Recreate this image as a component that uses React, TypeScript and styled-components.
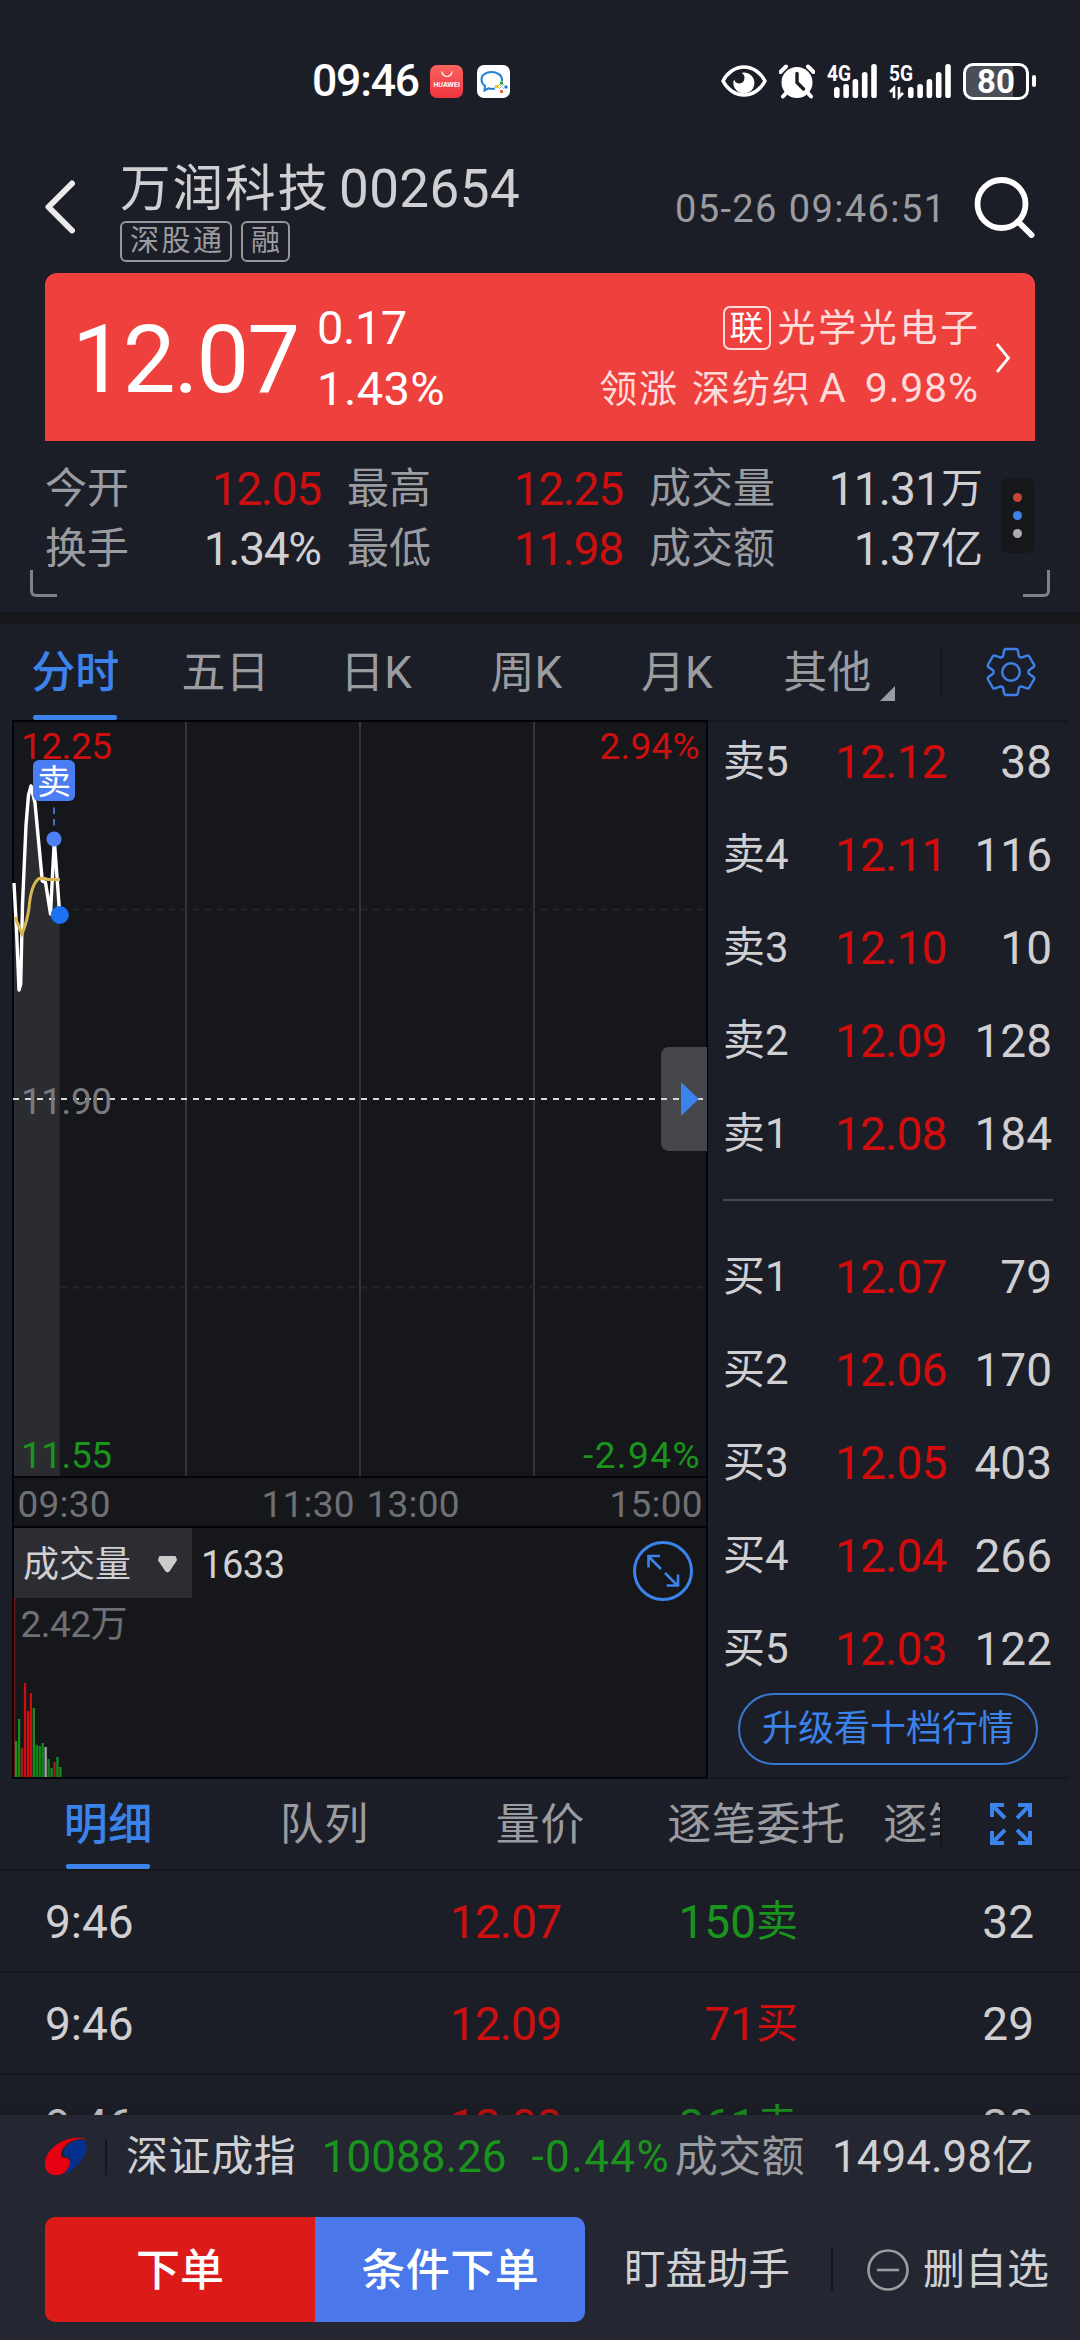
import React from "react";
import styled, { createGlobalStyle, css } from "styled-components";

const c = {
  bg: "#1c1e27",
  panel: "#16171b",
  line: "#16171d",
  edge: "#04050a",
  text: "#d0d0d2",
  muted: "#9b9ca0",
  dim: "#6f7074",
  red: "#ce0f0f",
  green: "#1a941c",
  blue: "#3b82ea",
};

const Global = createGlobalStyle`
  * { box-sizing: border-box; }
  body { margin: 0; background: ${c.bg}; }
`;

const Screen = styled.div`
  width: 1080px;
  height: 2340px;
  overflow: hidden;
  display: flex;
  flex-direction: column;
  background: ${c.bg};
  color: ${c.text};
  font-family: Roboto, "Noto Sans CJK SC", sans-serif;
`;

const T = styled.span<{ $s: number; $c?: string; $ls?: number; $w?: number }>`
  font-size: ${(p) => p.$s}px;
  line-height: 1;
  white-space: pre;
  color: ${(p) => p.$c ?? "inherit"};
  font-weight: ${(p) => p.$w ?? 400};
  letter-spacing: ${(p) => p.$ls ?? 0}px;
  margin-right: ${(p) => -(p.$ls ?? 0)}px;
`;

const Row = styled.div<{ $gap?: number }>`
  display: flex;
  align-items: center;
  gap: ${(p) => p.$gap ?? 0}px;
`;

/* ---------- status bar ---------- */

const StatusBar = styled.div`
  height: 162px;
  flex: none;
  display: flex;
  align-items: center;
  justify-content: space-between;
  padding: 0 44px 0 312px;
  color: #fff;
`;

const AppBadge = styled.div<{ $market?: boolean }>`
  width: 33px;
  height: 33px;
  border-radius: 7px;
  overflow: hidden;
  background: ${(p) => (p.$market ? "linear-gradient(#fb6460, #ee3440)" : "#fff")};
  margin-left: ${(p) => (p.$market ? 10 : 14)}px;
  display: flex;
  flex-direction: column;
  align-items: center;
`;

const BadgeName = styled.span`
  font: 700 6.5px/8px Inter, sans-serif;
  color: #fff;
  margin-top: 2px;
`;

const Battery = styled.div`
  width: 66px;
  height: 37px;
  border: 3px solid #fff;
  border-radius: 10px;
  margin-left: 12px;
  display: flex;
  align-items: center;
  justify-content: center;
  background: linear-gradient(90deg, #4b4e56 0 47px, transparent 47px);
`;

const BatteryNub = styled.div`
  width: 4px;
  height: 12px;
  border-radius: 2px;
  background: #fff;
  margin-left: 3px;
`;

const SignalSvg = styled.svg`
  overflow: visible;
`;

function Signal({ label, data }: { label: string; data?: boolean }) {
  const x0 = data ? 19 : 7;
  const tops = [23, 20, 15, 8, 0];
  return (
    <SignalSvg width={data ? 62 : 50} height={34} viewBox={`0 0 ${data ? 62 : 50} 34`}>
      <text x={0} y={17} fill="#fff" fontFamily="Roboto" fontWeight={700} fontSize={22.5} textLength={24} lengthAdjust="spacingAndGlyphs">
        {label}
      </text>
      {tops.map((t, i) => (
        <rect key={i} x={x0 + i * 9.3} y={t} width={5.6} height={34 - t} rx={2.6} fill="#fff" />
      ))}
      {data && (
        <path d="M1 28l4-4v10M10 23v10l4-4" fill="none" stroke="#fff" strokeWidth={2.6} />
      )}
    </SignalSvg>
  );
}

/* ---------- title bar ---------- */

const Header = styled.header`
  height: 111px;
  flex: none;
  display: flex;
  align-items: center;
  padding: 0 45px 22px 45px;
`;

const TitleBlock = styled.div`
  align-self: flex-start;
  margin-left: 45px;
  flex: 1;
  display: flex;
  flex-direction: column;
`;

const TitleLine = styled.div`
  display: flex;
  align-items: center;
  height: 59px;
  padding-bottom: 5px;
`;

const Tag = styled.span`
  height: 41px;
  padding: 0 8px;
  border: 2px solid #96979b;
  border-radius: 6px;
  display: flex;
  align-items: center;
`;

const Clock = styled.div`
  display: flex;
  padding-top: 5px;
`;

/* ---------- price card ---------- */

const Card = styled.section`
  height: 168px;
  flex: none;
  margin: 0 45px;
  padding: 2px 24px 0 27px;
  border-radius: 12px 12px 0 0;
  background: #ee403d;
  color: #fff;
  display: flex;
  align-items: center;
`;

const BigPrice = styled.div`
  display: flex;
  padding-top: 3px;
`;

const Lines = styled.div<{ $end?: boolean }>`
  display: flex;
  flex-direction: column;
  margin-left: ${(p) => (p.$end ? "auto" : "17px")};
  align-items: ${(p) => (p.$end ? "flex-end" : "flex-start")};
  > * {
    height: 61px;
    display: flex;
    align-items: center;
  }
`;

const LinkTag = styled.span`
  width: 48px;
  height: 44px;
  border: 2px solid #fddcdb;
  border-radius: 7px;
  display: flex;
  align-items: center;
  justify-content: center;
  margin-right: 7px;
`;

/* ---------- quote stats ---------- */

const Stats = styled.section`
  position: relative;
  height: 171px;
  flex: none;
  display: flex;
  padding: 18px 45px 0 45px;
`;

const StatGrid = styled.div`
  display: grid;
  grid-template-columns: 277px 277px 334px;
  grid-auto-rows: 60px;
  column-gap: 25px;
`;

const Stat = styled.div`
  display: flex;
  align-items: center;
  justify-content: space-between;
`;

const MorePill = styled.div`
  margin: 19px 0 0 18px;
  width: 33px;
  height: 75px;
  border-radius: 7px;
  background: ${c.panel};
  display: flex;
  flex-direction: column;
  align-items: center;
  justify-content: center;
  gap: 9px;
`;

const Dot = styled.i<{ $c: string }>`
  width: 9px;
  height: 9px;
  border-radius: 50%;
  background: ${(p) => p.$c};
`;

const Corner = styled.div<{ $right?: boolean }>`
  position: absolute;
  bottom: 15px;
  width: 27px;
  height: 27px;
  border-bottom: 3px solid #808184;
  ${(p) =>
    p.$right
      ? css`right: 30px; border-right: 3px solid #808184; border-bottom-right-radius: 6px;`
      : css`left: 30px; border-left: 3px solid #808184; border-bottom-left-radius: 6px;`}
`;

const Band = styled.div`
  height: 12px;
  flex: none;
  background: ${c.panel};
`;

/* ---------- tabs ---------- */

const TabBar = styled.nav<{ $h: number; $ruled?: boolean }>`
  height: ${(p) => p.$h}px;
  flex: none;
  display: flex;
  align-items: center;
  border-bottom: ${(p) => (p.$ruled ? `2px solid ${c.line}` : "none")};
`;

const TabStrip = styled.div`
  width: 940px;
  height: 100%;
  display: flex;
  overflow: hidden;
  flex: none;
`;

const Tab = styled.div<{ $w: number; $on?: boolean }>`
  width: ${(p) => p.$w}px;
  flex: none;
  height: 100%;
  display: flex;
  flex-direction: column;
  align-items: center;
  justify-content: space-between;
  color: ${(p) => (p.$on ? c.blue : c.muted)};
  &::after {
    content: "";
    width: 84px;
    height: 5px;
    border-radius: 2px;
    background: ${(p) => (p.$on ? c.blue : "transparent")};
  }
`;

const TabText = styled.div<{ $top: number }>`
  padding-top: ${(p) => p.$top}px;
  display: flex;
  align-items: flex-end;
  height: ${(p) => p.$top + 50}px;
`;

const Caret = styled.i`
  border-style: solid;
  border-width: 0 0 15px 15px;
  border-color: transparent transparent ${c.muted} transparent;
  margin: 0 -24px -6px 9px;
`;

const VLine = styled.div<{ $h: number }>`
  width: 2px;
  flex: none;
  height: ${(p) => p.$h}px;
  background: #15161b;
`;

const TabIcon = styled.div`
  flex: 1;
  display: flex;
  justify-content: center;
`;

/* ---------- chart + order book ---------- */

const Market = styled.section`
  height: 1059px;
  flex: none;
  display: flex;
  padding: 0 12px;
`;

const ChartBox = styled.div`
  width: 696px;
  flex: none;
  display: flex;
  background: ${c.panel};
`;

const Book = styled.div`
  flex: 1;
  display: flex;
  flex-direction: column;
  border-top: 2px solid ${c.line};
  border-bottom: 2px solid ${c.line};
  padding: 0 15px;
`;

const BookSide = styled.div<{ $buy?: boolean }>`
  margin-top: ${(p) => (p.$buy ? 29 : -7)}px;
`;

const BookRow = styled.div`
  height: 93px;
  display: grid;
  grid-template-columns: 112px 1fr auto;
  align-items: center;
  padding-right: 1px;
`;

const BookRule = styled.div`
  height: 2px;
  margin: 19px 0 0;
  background: #474855;
`;

const Upgrade = styled.button`
  width: 300px;
  height: 72px;
  flex: none;
  margin: -2px auto 0;
  padding: 0;
  border: 2px solid #3a77cf;
  border-radius: 36px;
  background: none;
  color: ${c.blue};
  font-family: inherit;
  display: flex;
  align-items: center;
  justify-content: center;
`;

/* ---------- trades ---------- */

const Trades = styled.section`
  height: 244px;
  flex: none;
  overflow: hidden;
`;

const Trade = styled.div`
  height: 102px;
  display: grid;
  grid-template-columns: 300px 217px 236px 1fr;
  align-items: center;
  padding: 1px 46px 0 45px;
  border-bottom: 2px solid ${c.line};
  > :not(:first-child) {
    justify-self: end;
  }
`;

/* ---------- footer ---------- */

const Footer = styled.footer`
  flex: 1;
  background: #242632;
  display: flex;
  flex-direction: column;
  box-shadow: 0 -4px 8px rgba(18, 19, 25, 0.2);
  z-index: 1;
`;

const IndexRow = styled.div`
  height: 84px;
  display: flex;
  align-items: center;
  padding: 0 46px 0 45px;
`;

const Actions = styled.div`
  display: flex;
  align-items: center;
  margin-top: 18px;
  padding: 0 30px 0 45px;
`;

const Action = styled.button<{ $buy?: boolean }>`
  width: 270px;
  height: 105px;
  padding: 2px 0 0;
  border: 0;
  border-radius: ${(p) => (p.$buy ? "10px 0 0 10px" : "0 10px 10px 0")};
  background: ${(p) => (p.$buy ? "#dc1a18" : "#4a78ea")};
  color: #fff;
  font-family: inherit;
`;

const Spacer = styled.i<{ $w: number }>`
  width: ${(p) => p.$w}px;
  flex: none;
`;

const Fill = styled.i`
  flex: 1;
`;

/* ---------- chart drawing ---------- */

const bars: [number, string][] = [
  [36, "#2a8a1c"], [58, "#178a18"], [29, "#a02018"], [94, "#d00c0c"],
  [66, "#d00c0c"], [84, "#d00c0c"], [69, "#1f8a20"], [32, "#0f8c14"],
  [31, "#0f8c14"], [34, "#0f8c14"], [30, "#a4a8a6"], [18, "#1f7a24"],
  [9, "#128c16"], [15, "#a02018"], [20, "#178a18"], [10, "#178a18"],
];

const linePath =
  "M14 883L16.5 930L19 990L20.7 984L22.5 905L26 825L28.5 795L31 786L35 803L42.3 881L45.5 882.5L50.5 914L54.3 840L59.7 914";

function Chart() {
  const label = { fontFamily: "Roboto, 'Noto Sans CJK SC'", fontSize: 37 };
  const fit = (n: number) => ({ textLength: n, lengthAdjust: "spacing" as const });
  return (
    <svg width={696} height={1059} viewBox="12 720 696 1059">
      <rect x={13} y={721} width={694} height={1057} fill="none" stroke={c.edge} strokeWidth={2} />
      <path d={linePath + "V1476H14Z"} fill="#2b2c30" />
      {[186, 360, 534].map((x) => (
        <path key={x} d={`M${x} 722V1476`} stroke="#33333d" strokeWidth={2} />
      ))}
      {[909.5, 1287.5].map((y) => (
        <path key={y} d={`M61 ${y}H705`} stroke="#24262b" strokeWidth={2} strokeDasharray="6 6" />
      ))}
      <path d="M14 1477H706M14 1527H706" stroke={c.edge} strokeWidth={2} />

      <path d="M707 1047H669a8 8 0 0 0-8 8V1143a8 8 0 0 0 8 8H707Z" fill="#454649" />
      <path d="M13 1099H705" stroke="#d8d8da" strokeWidth={2} strokeDasharray="6 6" />
      <path d="M681 1082L699 1099L681 1116Z" fill={c.blue} />

      <path d={linePath} fill="none" stroke="#fff" strokeWidth={3.4} strokeLinejoin="round" />
      <path
        d="M15 917L22 934Q27 922 29 908Q31 884 39 878.5Q44 878 48 879.5L60 879.5"
        fill="none"
        stroke="#d9b750"
        strokeWidth={3}
      />
      <text x={21} y={759} fill={c.red} {...label} {...fit(91)}>12.25</text>
      <text x={599.5} y={759} fill={c.red} {...label} {...fit(100)}>2.94%</text>
      <text x={21} y={1114} fill="#7a7b7f" {...label} {...fit(91)}>11.90</text>
      <text x={21} y={1468} fill={c.green} {...label} {...fit(91)}>11.55</text>
      <text x={583} y={1468} fill={c.green} {...label} {...fit(116.5)}>-2.94%</text>

      <path d="M54 807.5v6.5M54 819v6.5" stroke="#466fc4" strokeWidth={2} />
      <circle cx={54} cy={839} r={7.6} fill="#4d80f4" />
      <circle cx={59.8} cy={915} r={9} fill="#1a71f2" />
      <rect x={33} y={760} width={42} height={41} rx={6} fill="#4a7cf3" />
      <text x={37} y={793.5} fill="#fff" {...label} fontSize={34}>卖</text>

      <text x={17.5} y={1517} fill={c.dim} {...label} {...fit(93)}>09:30</text>
      <text x={261.5} y={1517} fill={c.dim} {...label} {...fit(93)}>11:30</text>
      <text x={366.5} y={1517} fill={c.dim} {...label} {...fit(93)}>13:00</text>
      <text x={609.5} y={1517} fill={c.dim} {...label} {...fit(93)}>15:00</text>

      <rect x={14} y={1528} width={178} height={70} fill="#2c2d32" />
      <text x={23} y={1577} fill={c.text} {...label} fontSize={36}>成交量</text>
      <path d="M160 1557h15l1 3l-7 10.500q-1.500 2-3 0l-7-10.500Z" fill="#ccc" stroke="#ccc" strokeWidth={2} strokeLinejoin="round" />
      <text x={201} y={1577.5} fill={c.text} {...label} fontSize={38} {...fit(84)}>1633</text>
      <g fill="none" stroke={c.blue} strokeWidth={3}>
        <circle cx={663} cy={1571} r={28.5} />
        <path d="M661 1569L649 1557M648.500 1567.500V1556H660M665 1573L677 1585M678 1574.500V1585.500H666.500" strokeWidth={2.6} />
      </g>
      <text x={20.500} y={1637} fill={c.dim} {...label} {...fit(107)}>2.42万</text>
      <path d="M14.700 1598V1777" stroke="#7c1414" strokeWidth={1.2} />
      {bars.map(([h, fill], i) => (
        <rect key={i} x={15 + i * 2.95} y={1777 - h} width={2.3} height={h} fill={fill} />
      ))}
    </svg>
  );
}

const sells = [["卖5", "12.12", "38"], ["卖4", "12.11", "116"], ["卖3", "12.10", "10"], ["卖2", "12.09", "128"], ["卖1", "12.08", "184"]];
const buys = [["买1", "12.07", "79"], ["买2", "12.06", "170"], ["买3", "12.05", "403"], ["买4", "12.04", "266"], ["买5", "12.03", "122"]];

const BookRows = ({ rows }: { rows: string[][] }) => (
  <>
    {rows.map(([name, price, qty]) => (
      <BookRow key={name}>
        <T $s={42}>{name}</T>
        <T $s={46} $c="#d20c0c" $ls={-0.8}>{price}</T>
        <T $s={46}>{qty}</T>
      </BookRow>
    ))}
  </>
);

const stats: [string, string, string?][] = [
  ["今开", "12.05", c.red], ["最高", "12.25", c.red], ["成交量", "11.31万"],
  ["换手", "1.34%"], ["最低", "11.98", c.red], ["成交额", "1.37亿"],
];

const trades: [string, string, string, string, string][] = [
  ["9:46", "12.07", "150", "卖", "32"],
  ["9:46", "12.09", "71", "买", "29"],
  ["9:46", "12.08", "261", "卖", "28"],
];

export default function App() {
  return (
    <Screen>
      <Global />
      <StatusBar>
        <Row>
          <T $s={44.5} $w={500} $ls={-1.2}>09:46</T>
          <AppBadge $market>
            <svg width={14} height={14} viewBox="0 0 14 14">
              <path d="M2 6.500a5 5 0 0 0 10 0" fill="none" stroke="#fff" strokeWidth={1.2} />
            </svg>
            <BadgeName>HUAWEI</BadgeName>
          </AppBadge>
          <AppBadge>
            <svg width={33} height={33} viewBox="0 0 33 33" fill="none">
              <path d="M18 23.500Q14.500 24.500 11.500 23.300L7.500 25.500L8 21Q4.500 18.500 4.500 14.500C4.500 10 9 7 14.500 7S25 10 25 14.500V16" stroke="#2180d4" strokeWidth={2} />
              <path d="M24.500 16.500v3" stroke="#2f9f3a" strokeWidth={3} />
              <path d="M27.500 22h3" stroke="#2180d4" strokeWidth={3} />
              <path d="M24.500 25v3" stroke="#e4663c" strokeWidth={3} />
              <path d="M18 21.500h4" stroke="#f0c13a" strokeWidth={3} />
              <path d="M22 19l5 5M27 19l-5 5" stroke="#8fb7a8" strokeWidth={0.8} />
            </svg>
          </AppBadge>
        </Row>
        <Row>
          <svg width={46} height={32} viewBox="0 0 46 32">
            <path d="M2 16C6 8 14 2 23 2S40 8 44 16C40 24 32 30 23 30S6 24 2 16Z" fill="none" stroke="#fff" strokeWidth={3.4} />
            <path d="M23 7.500a10.500 10.500 0 1 1-10 7q1.500 4 5.500 4q5-.5 5-6q0-3-3-4.500q1-.5 2.500-.5Z" fill="#fff" />
          </svg>
          <Spacer $w={12} />
          <svg width={36} height={35} viewBox="0 0 36 35">
            <circle cx={18} cy={18.500} r={15.500} fill="#fff" />
            <path d="M1.500 8l5.500-5.500M34.500 8L29 2.500M8 28l-4 4.500M28 28l4 4.500" stroke="#fff" strokeWidth={4} strokeLinecap="round" />
            <path d="M18 9.500V18.500L24.500 25" fill="none" stroke={c.bg} strokeWidth={3.400} strokeLinecap="round" strokeLinejoin="round" />
          </svg>
          <Spacer $w={12} />
          <Signal label="4G" />
          <Spacer $w={12} />
          <Signal label="5G" data />
          <Battery>
            <T $s={33} $w={700}>80</T>
          </Battery>
          <BatteryNub />
        </Row>
      </StatusBar>

      <Header>
        <svg width={30} height={54} viewBox="0 0 30 54">
          <path d="M27 3.500L3.500 27L27 50.500" fill="none" stroke="#ebebeb" strokeWidth={6} strokeLinecap="round" strokeLinejoin="round" />
        </svg>
        <TitleBlock>
          <TitleLine>
            <T $s={50.5} $ls={2}>万润科技</T>
            <Spacer $w={11} />
            <T $s={53} $ls={0.4}>002654</T>
          </TitleLine>
          <Row $gap={9}>
            <Tag><T $s={29} $ls={2.5} $c={c.muted}>深股通</T></Tag>
            <Tag><T $s={29} $c={c.muted}>融</T></Tag>
          </Row>
        </TitleBlock>
        <Clock><T $s={38} $ls={1.4} $c={c.muted}>05-26 09:46:51</T></Clock>
        <Spacer $w={28} />
        <svg width={62} height={62} viewBox="0 0 62 62" fill="none" stroke="#fff">
          <circle cx={28.500} cy={28} r={24} strokeWidth={5.800} />
          <path d="M45 45.500L58.500 59" strokeWidth={6} strokeLinecap="round" />
        </svg>
      </Header>

      <Card>
        <BigPrice><T $s={94} $ls={-2}>12.07</T></BigPrice>
        <Lines>
          <div><T $s={47} $ls={-0.5}>0.17</T></div>
          <div><T $s={47} $ls={0.4}>1.43%</T></div>
        </Lines>
        <Lines $end>
          <div>
            <LinkTag><T $s={34}>联</T></LinkTag>
            <T $s={38} $ls={2.6} $c="#fddcdb">光学光电子</T>
          </div>
          <div>
            <T $s={38} $ls={1.8} $c="#fddcdb">领涨</T>
            <Spacer $w={15} />
            <T $s={38} $ls={2} $c="#fddcdb">深纺织</T>
            <Spacer $w={9} />
            <T $s={41} $c="#fddcdb">A</T>
            <Spacer $w={19} />
            <T $s={41} $ls={0.8} $c="#fddcdb">9.98%</T>
          </div>
        </Lines>
        <Spacer $w={17} />
        <svg width={16} height={32} viewBox="0 0 16 32">
          <path d="M2 2L13.500 16L2 30" fill="none" stroke="#fff" strokeWidth={2.800} />
        </svg>
      </Card>

      <Stats>
        <StatGrid>
          {stats.map(([name, value, color]) => (
            <Stat key={name}>
              <T $s={42} $c={c.muted}>{name}</T>
              {/[万亿]$/.test(value) ? (
                <Row>
                  <T $s={46} $ls={-0.8}>{value.slice(0, -1)}</T>
                  <T $s={42}>{value.slice(-1)}</T>
                </Row>
              ) : (
                <T $s={46} $ls={-1.3} $c={color}>{value}</T>
              )}
            </Stat>
          ))}
        </StatGrid>
        <MorePill>
          <Dot $c="#c34534" />
          <Dot $c={c.blue} />
          <Dot $c="#acadb1" />
        </MorePill>
        <Corner />
        <Corner $right />
      </Stats>
      <Band />

      <TabBar $h={96}>
        <TabStrip>
          {["分时", "五日", "日K", "周K", "月K", "其他"].map((name, i) => (
            <Tab key={name} $w={150.4} $on={i === 0}>
              <TabText $top={21}>
                <T $s={44} $w={i === 0 ? 500 : 400}>{name}</T>
                {i === 5 && <Caret />}
              </TabText>
            </Tab>
          ))}
        </TabStrip>
        <VLine $h={45} />
        <TabIcon>
          <svg width={50} height={50} viewBox="-25 -25 50 50" fill="none" stroke={c.blue} strokeWidth={2.4} strokeLinejoin="round">
            <path d="M-5 -23H5Q6.500 -23 6.800 -21.500L8 -15.500L10.200 -14.300L16 -16.300Q17.500 -16.800 18.300 -15.500L23 -7.300Q23.600 -6 22.500 -5L17.500 -1.200V1.200L22.500 5Q23.600 6 23 7.300L18.300 15.500Q17.500 16.800 16 16.300L10.200 14.300L8 15.500L6.800 21.500Q6.500 23 5 23H-5Q-6.500 23 -6.800 21.500L-8 15.500L-10.200 14.300L-16 16.300Q-17.500 16.800 -18.300 15.500L-23 7.300Q-23.600 6 -22.500 5L-17.500 1.200V-1.200L-22.500 -5Q-23.600 -6 -23 -7.300L-18.300 -15.500Q-17.500 -16.800 -16 -16.300L-10.200 -14.300L-8 -15.500L-6.800 -21.500Q-6.500 -23 -5 -23Z" />
            <circle r={8.800} />
          </svg>
        </TabIcon>
      </TabBar>

      <Market>
        <ChartBox>
          <Chart />
        </ChartBox>
        <Book>
          <BookSide>
            <BookRows rows={sells} />
          </BookSide>
          <BookRule />
          <BookSide $buy>
            <BookRows rows={buys} />
          </BookSide>
          <Upgrade><T $s={36}>升级看十档行情</T></Upgrade>
        </Book>
      </Market>

      <TabBar $h={92} $ruled>
        <TabStrip>
          {["明细", "队列", "量价", "逐笔委托", "逐笔成交"].map((name, i) => (
            <Tab key={name} $w={216} $on={i === 0}>
              <TabText $top={18}>
                <T $s={44} $ls={0.5} $w={i === 0 ? 500 : 400}>{name}</T>
              </TabText>
            </Tab>
          ))}
        </TabStrip>
        <VLine $h={45} />
        <TabIcon>
          <svg width={42} height={42} viewBox="0 0 42 42" fill="none" stroke={c.blue} strokeWidth={4}>
            <path d="M14 2H2V14M28 2H40V14M14 40H2V28M28 40H40V28M2 2L15 15M40 2L27 15M2 40L15 27M40 40L27 27" />
          </svg>
        </TabIcon>
      </TabBar>

      <Trades>
        {trades.map(([time, price, n, side, qty], i) => {
          const tone = side === "卖" ? c.green : c.red;
          return (
            <Trade key={i}>
              <T $s={46}>{time}</T>
              <T $s={46} $ls={-0.8} $c={c.red}>{price}</T>
              <Row>
                <T $s={46} $c={tone}>{n}</T>
                <T $s={42} $c={tone}>{side}</T>
              </Row>
              <T $s={46}>{qty}</T>
            </Trade>
          );
        })}
      </Trades>

      <Footer>
        <IndexRow>
          <svg width={42} height={40} viewBox="0 0 42 40">
            <path d="M42 3C36-1 22 0 11 8C1 15-3 27 2 34C7 41 20 39 24 30C27 24 23 20 19 21C14 20 15 13 22 7C28 2 36 1 42 3Z" fill="#e60012" />
            <path d="M40 4C35 1 27 4 21 10C18 14 18 18 21 19C26 20 27 26 22 33C20 36 21 36 24 35C34 29 46 13 40 4Z" fill="#06308e" />
          </svg>
          <Spacer $w={18} />
          <VLine $h={36} />
          <Spacer $w={19} />
          <T $s={42} $ls={0.6}>深证成指</T>
          <Spacer $w={26} />
          <T $s={44} $c={c.green}>10088.26</T>
          <Spacer $w={25} />
          <T $s={44} $c={c.green} $ls={1.4}>-0.44%</T>
          <Spacer $w={6} />
          <T $s={43} $c={c.muted} $ls={0.4}>成交额</T>
          <Fill />
          <T $s={44}>1494.98</T>
          <T $s={42}>亿</T>
        </IndexRow>
        <Actions>
          <Action $buy><T $s={44} $w={500}>下单</T></Action>
          <Action><T $s={44} $w={500} $ls={0.5}>条件下单</T></Action>
          <Spacer $w={39} />
          <T $s={41.5}>盯盘助手</T>
          <Spacer $w={41} />
          <VLine $h={42} />
          <Spacer $w={34} />
          <svg width={42} height={42} viewBox="0 0 42 42" fill="none" stroke={c.muted} strokeWidth={2.600}>
            <circle cx={21} cy={21} r={19.500} />
            <path d="M10 21h22" />
          </svg>
          <Spacer $w={14} />
          <T $s={42}>删自选</T>
        </Actions>
      </Footer>
    </Screen>
  );
}
